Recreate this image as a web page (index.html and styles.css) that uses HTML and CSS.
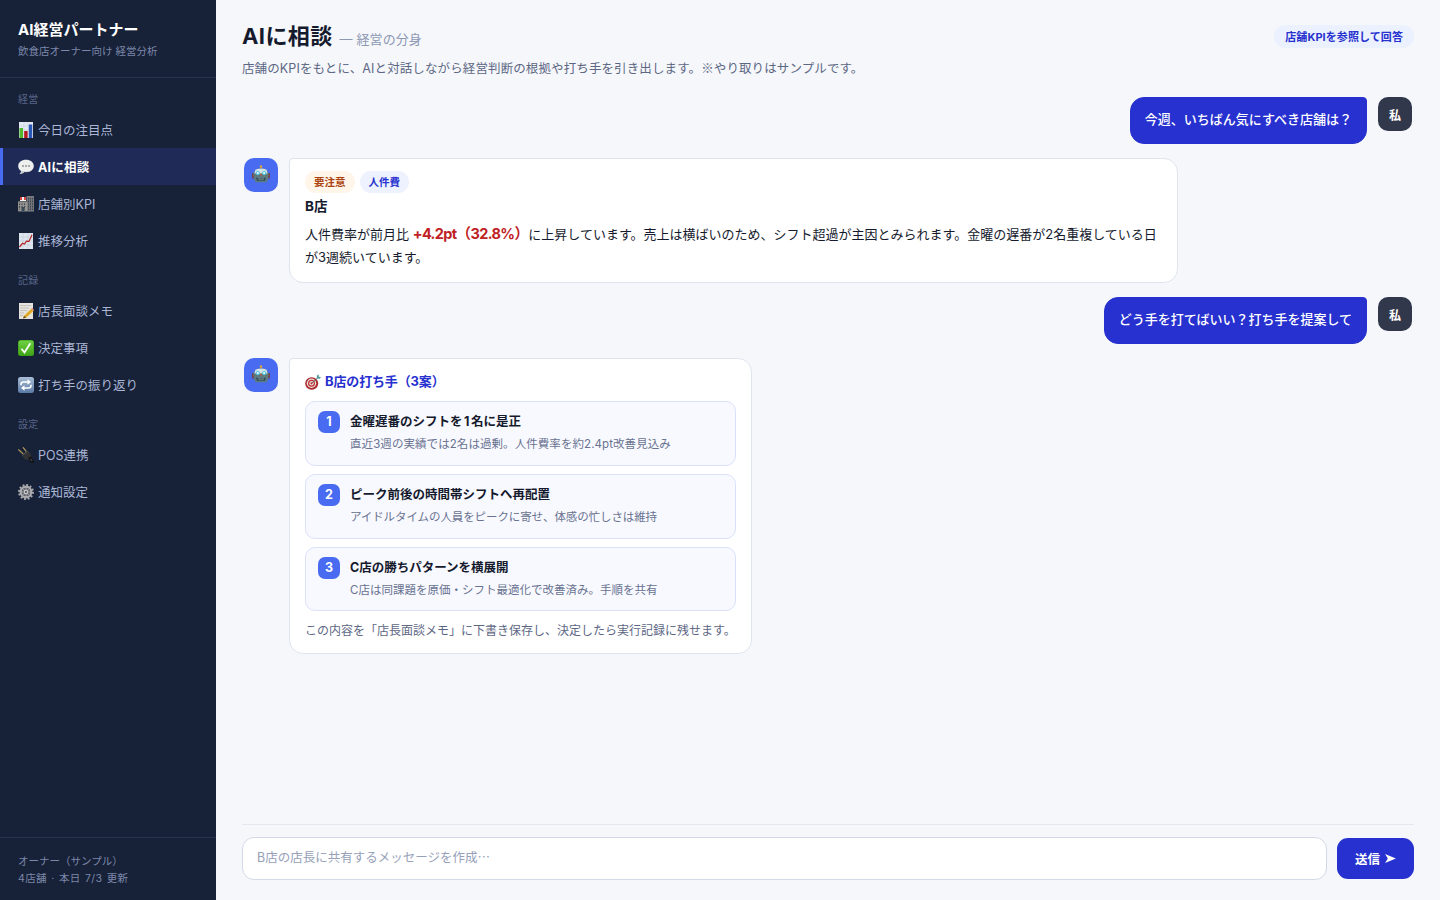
FILE: index.html
```html
<!DOCTYPE html>
<html lang="ja">
<head>
<meta charset="utf-8">
<title>AIに相談</title>
<link rel="stylesheet" href="styles.css">
</head>
<body>
<svg class="defs" aria-hidden="true">
  <defs>
    <linearGradient id="steel" x1="0" y1="0" x2="0" y2="1"><stop offset="0" stop-color="#a9bdd6"/><stop offset="1" stop-color="#5a7aa5"/></linearGradient>
    <linearGradient id="green" x1="0" y1="0" x2="0" y2="1"><stop offset="0" stop-color="#6fd044"/><stop offset="1" stop-color="#3fa516"/></linearGradient>
    <symbol id="robot" viewBox="0 0 16 16">
      <path d="M8 1v3" stroke="#a67a3c" stroke-width="1.2"/><circle cx="8" cy="1.3" r="1.1" fill="#e0a13c"/>
      <rect x="0" y="7" width="2" height="5" rx=".8" fill="#7a4145"/><rect x="14" y="7" width="2" height="5" rx=".8" fill="#7a4145"/>
      <path d="M3 4.300Q8 1.600 13 4.300L14.800 8Q14.900 12 12.900 15.300H3.100Q1.100 12 1.200 8Z" fill="#5c7a81"/>
      <path d="M3 4.300Q8 1.800 13 4.300L13.900 7.500H2.100Z" fill="#d3e2e5"/>
      <circle cx="5.2" cy="7.2" r="1.9" fill="#59c7dc"/><circle cx="10.8" cy="7.2" r="1.9" fill="#59c7dc"/>
      <circle cx="5.2" cy="7.2" r=".9" fill="#eefcff"/><circle cx="10.8" cy="7.2" r=".9" fill="#eefcff"/>
      <path d="M8 7.4l1.100 2H6.900z" fill="#c4483b"/><path d="M3.600 11q4.400 1.500 8.800 0l-.8 3H4.400z" fill="#344d56"/><path d="M6.300 11.800v1.600M8 12v1.500M9.700 11.800v1.600" stroke="#a4bdc1" stroke-width=".6"/>
    </symbol>
  </defs>
</svg>
<div class="app">
  <aside class="sidebar">
    <div class="brand">
      <div class="brand-name">AI経営パートナー</div>
      <div class="brand-sub">飲食店オーナー向け 経営分析</div>
    </div>
    <nav class="nav">
      <div class="nav-label">経営</div>
      <a class="nav-item"><svg class="emoji" viewBox="0 0 16 16"><rect x="1" y="0" width="14" height="16" fill="#e4e9f1"/><path d="M1 4h14M1 8h14M1 12h14M6 0v16M10 0v16" stroke="#c5cedb" stroke-width=".5"/><rect x="1.500" y="6" width="3.500" height="10" fill="#4fb82c"/><rect x="6.200" y="9" width="3.400" height="7" fill="#b5161d"/><rect x="10.800" y="2.500" width="3.400" height="13.500" fill="#2b57b8"/></svg>今日の注目点</a>
      <a class="nav-item active"><svg class="emoji" viewBox="0 0 16 16"><path d="M8 .8C3.500.8.2 3.400.2 7c0 2.200 1.200 3.900 2.800 5 .1 1.200-.7 2.500-1.500 3 2 .1 3.800-.7 4.900-1.900 5.200.7 9.400-2 9.400-6.100C15.800 3.400 12.500.8 8 .8z" fill="#eeefef"/><path d="M3.500 11.700c3 1.200 8 1.500 11-1.200-2.200 2.500-6 2.800-8.100 2.500L3 14.500z" fill="#bfc2c5"/><circle cx="5" cy="7" r=".8" fill="#555"/><circle cx="8" cy="7" r=".8" fill="#555"/><circle cx="11" cy="7" r=".8" fill="#555"/></svg>AIに相談</a>
      <a class="nav-item"><svg class="emoji" viewBox="0 0 16 16"><rect x="8.500" y="0" width="7.500" height="15" fill="#77787b"/><path d="M0 5.500h9.500V15H0z" fill="#97938e"/><path d="M0 5.200h9.500v1H0z" fill="#65676c"/><path d="M2 1h6v4H2z" fill="#f2f2f2"/><path d="M2 1h2v3H2zM6 1h2v3H6z" fill="#d54a43"/><path d="M1.500 7.500v6M4 7.500v4M6.500 7.500v6M10.500 2v12M12.500 2v12M14.500 2v12" stroke="#374552" stroke-width="1.100" stroke-dasharray="1.600 1"/><path d="M3.500 11h3v4h-3z" fill="#384958"/><path d="M0 15h16v.8H0z" fill="#58616b"/></svg>店舗別KPI</a>
      <a class="nav-item"><svg class="emoji" viewBox="0 0 16 16"><rect x="1" y="0" width="14" height="16" fill="#dfe6ef"/><path d="M1 4h14M1 8h14M1 12h14M5 0v16M10 0v16" stroke="#b8c4d3" stroke-width=".5"/><path d="M1.500 14l3-3.700 2 .8 2-3 2.500.3L14 1.800" fill="none" stroke="#b62424" stroke-width="1.200"/></svg>推移分析</a>
      <div class="nav-label">記録</div>
      <a class="nav-item"><svg class="emoji" viewBox="0 0 16 16"><path d="M1 0h14v16H1z" fill="#e5e3dc"/><path d="M2 2.500h11M2 5h9M2 7.500h7M2 10h4M2 12.500h3" stroke="#a7a9af" stroke-width=".6"/><path d="M6 12.800l7.300-7.100 2.200 2.200-7.300 6.900-3.200.7z" fill="#e8b32c"/><path d="M13.300 5.700l.9-.8 2 2-.7 1z" fill="#d87d82"/><path d="M5 15.500l1-2.700 2.200 2z" fill="#6a573b"/><path d="M7 13.600l7.100-6.900" stroke="#b98319" stroke-width=".5"/></svg>店長面談メモ</a>
      <a class="nav-item"><svg class="emoji" viewBox="0 0 16 16"><rect x="0" y="0" width="16" height="16" rx="2.500" fill="#369715"/><rect x=".5" y=".5" width="15" height="15" rx="2.200" fill="url(#green)"/><path d="M3.500 8.800l3 3.700 5.800-9.300" fill="none" stroke="#fff" stroke-width="1.800"/></svg>決定事項</a>
      <a class="nav-item"><svg class="emoji" viewBox="0 0 16 16"><rect width="16" height="16" rx="2.500" fill="url(#steel)"/><path d="M3 8.300V7.500Q3 5 5.500 5H10M13 7.700v.8Q13 11 10.500 11H6" fill="none" stroke="#fff" stroke-width="1.600"/><path d="M9.500 2.300L13 5 9.500 7.700zM6.500 8.300L3 11l3.500 2.700z" fill="#fff"/></svg>打ち手の振り返り</a>
      <div class="nav-label">設定</div>
      <a class="nav-item"><svg class="emoji" viewBox="0 0 16 16"><path d="M.3 2.500l5 4.500M5 .3l4 5" stroke="#b39a58" stroke-width="1.200"/><path d="M3.500 8L9.500 3.600l3.200 3.200.8 3.800-2.500 2-4 .2z" fill="#303235"/><path d="M4.500 8.200L9.400 4.500" stroke="#65686a" stroke-width=".8"/><path d="M10.300 10.500l2.500-1 3.200 5-.5 1.500-3-.7z" fill="#111214"/><path d="M12.500 11.800l1.500 2.200" stroke="#75787b" stroke-width=".7"/></svg>POS連携</a>
      <a class="nav-item"><svg class="emoji" viewBox="0 0 16 16"><circle cx="8" cy="8" r="7" fill="none" stroke="#a7a9ac" stroke-width="2" stroke-dasharray="1.900 1.765"/><circle cx="8" cy="8" r="5.300" fill="none" stroke="#a9abae" stroke-width="2.400"/><circle cx="8" cy="8" r="4" fill="#6d7075"/><path d="M8 3.500v9M3.500 8h9M4.800 4.800l6.400 6.400M4.800 11.200l6.400-6.400" stroke="#a6a8ab" stroke-width=".7"/><circle cx="8" cy="8" r="2.200" fill="#c9cacc"/><circle cx="8" cy="8" r="1" fill="#3e4249"/></svg>通知設定</a>
    </nav>
    <div class="account">オーナー（サンプル）<div class="updated">4店舗 · 本日 7/3 更新</div></div>
  </aside>
  <main class="main">
    <header class="head">
      <div>
        <h1 class="title">AIに相談<span class="title-sub">— 経営の分身</span></h1>
        <p class="lead">店舗のKPIをもとに、AIと対話しながら経営判断の根拠や打ち手を引き出します。<span class="cjk">※</span>やり取りはサンプルです。</p>
      </div>
      <span class="context">店舗KPIを参照して回答</span>
    </header>
    <section class="chat">
      <div class="row mine"><div class="bubble ask">今週、いちばん気にすべき店舗は？</div><div class="avatar me">私</div></div>
      <div class="row">
        <div class="avatar"><svg class="bot" viewBox="0 0 16 16"><use href="#robot"/></svg></div>
        <div class="bubble answer">
          <div class="chips"><span class="chip warn">要注意</span><span class="chip">人件費</span></div>
          <div class="store">B店</div>
          <p class="text">人件費率が前月比 <strong class="delta">+4.2pt（32.8%）</strong>に上昇しています。売上は横ばいのため、シフト超過が主因とみられます。金曜の遅番が2名重複している日が3週続いています。</p>
        </div>
      </div>
      <div class="row mine"><div class="bubble ask">どう手を打てばいい？打ち手を提案して</div><div class="avatar me">私</div></div>
      <div class="row">
        <div class="avatar"><svg class="bot" viewBox="0 0 16 16"><use href="#robot"/></svg></div>
        <div class="bubble plan">
          <div class="plan-title"><svg class="target" viewBox="0 0 16 16"><ellipse cx="6.700" cy="9.500" rx="6.500" ry="6.200" fill="#a92b2d"/><circle cx="6.500" cy="9.300" r="4.700" fill="#eee4e0"/><circle cx="6.500" cy="9.300" r="3.500" fill="#bd3033"/><circle cx="6.500" cy="9.300" r="2.200" fill="#eee4e0"/><circle cx="6.500" cy="9.300" r="1.100" fill="#bd3033"/><path d="M6.500 9.300L13 3.800" stroke="#555f64" stroke-width=".8"/><path d="M11.500 4.500L12 1.500l1.600-1.300.2 2.500 2.200.3-1.300 1.700z" fill="#4f9b9d"/></svg>B店の打ち手（3案）</div>
          <div class="option"><span class="num">1</span><div><div class="option-title">金曜遅番のシフトを<span class="digit">1</span>名に是正</div><div class="option-desc loose">直近3週の実績では2名は過剰。人件費率を約2.4pt改善見込み</div></div></div>
          <div class="option"><span class="num">2</span><div><div class="option-title">ピーク前後の時間帯シフトへ再配置</div><div class="option-desc tight">アイドルタイムの人員をピークに寄せ、体感の忙しさは維持</div></div></div>
          <div class="option"><span class="num">3</span><div><div class="option-title">C店の勝ちパターンを横展開</div><div class="option-desc">C店は同課題を原価・シフト最適化で改善済み。手順を共有</div></div></div>
          <div class="note">この内容を「店長面談メモ」に下書き保存し、決定したら実行記録に残せます。</div>
        </div>
      </div>
    </section>
    <footer class="composer">
      <div class="field">B店の店長に共有するメッセージを作成<span class="cjk">…</span></div>
      <button class="send">送信<svg class="send-icon" viewBox="0 0 12 10"><path d="M0 0L12 5 0 10 3 5z" fill="#fff"/></svg></button>
    </footer>
  </main>
</div>
</body>
</html>
```
FILE: styles.css
```css
* { box-sizing: border-box; }
body {
  margin: 0;
  font-family: Inter, "Noto Sans CJK JP", sans-serif;
  font-size: 13px;
  color: #151a2d;
  background: #f5f7fb;
}
p, h1 { margin: 0; }
svg { display: block; flex: none; }
.defs { position: absolute; width: 0; height: 0; }
.app { display: flex; height: 900px; }

.sidebar { width: 216px; flex: none; display: flex; flex-direction: column; background: #172137; }
.brand { height: 78px; padding: 18px 18px 0; border-bottom: 1px solid #29324a; white-space: nowrap; }
.brand-name { font-size: 15px; line-height: 23px; font-weight: 700; color: #fff; }
.brand-sub { margin-top: 3px; font-size: 10.5px; line-height: 16px; color: #7c88ab; }
.nav { flex: 1; }
.nav-label { height: 33px; padding: 14px 18px 0; font-size: 10px; line-height: 14px; letter-spacing: .3px; color: #59668a; }
.nav-item { display: flex; align-items: center; gap: 4px; height: 37px; padding-left: 15px; border-left: 3px solid transparent; font-size: 12.5px; color: #aab6d6; }
.nav-item.active { background: #1f2b56; border-left-color: #496bf1; color: #fff; font-weight: 700; letter-spacing: .2px; }
.emoji { width: 16px; height: 16px; }
.account { height: 63px; padding: 15px 18px 0; border-top: 1px solid #29324a; font-size: 10.5px; line-height: 17px; color: #7c88ab; }
.updated { letter-spacing: .4px; word-spacing: .9px; }

.main { flex: 1; min-width: 0; display: flex; flex-direction: column; padding: 20px 26px; }
.head { display: flex; justify-content: space-between; align-items: flex-start; height: 77px; white-space: nowrap; }
.title { font-size: 22px; line-height: 32px; font-weight: 700; letter-spacing: .4px; }
.title-sub { margin-left: 7px; font-size: 13px; font-weight: 400; letter-spacing: .1px; color: #8d98b4; }
.lead { margin-top: 4px; font-size: 12.5px; line-height: 20px; letter-spacing: .11px; color: #5d6784; }
.context { margin-top: 5px; padding: 1px 11px 0; border-radius: 12px; background: #ebf1fe; color: #2731cf; font-size: 11px; line-height: 22px; letter-spacing: .08px; font-weight: 700; }

.chat { flex: 1; display: flex; flex-direction: column; gap: 14px; padding: 0 2px; }
.row { display: flex; align-items: flex-start; gap: 11px; }
.mine { justify-content: flex-end; }
.avatar { width: 34px; height: 34px; flex: none; display: flex; align-items: center; justify-content: center; border-radius: 10px; background: #496bf1; }
.me { background: #31384b; color: #fff; font-size: 12px; font-weight: 700; }
.bot { width: 18px; height: 18px; margin-top: -2px; }
.bubble { padding: 12px 15px; border: 1px solid #e0e4ef; border-radius: 4px 14px 14px 14px; background: #fff; line-height: 23px; }
.ask { height: 47px; padding: 10px 14px; border-color: #2731cf; border-radius: 14px 4px 14px 14px; background: #2731cf; color: #fff; white-space: nowrap; font-weight: 500; }
.answer { width: 889px; height: 125px; }
.chips { display: flex; gap: 5px; }
.chip { padding: 1px 9px 0; border-radius: 11px; background: #eef2fe; color: #2731cf; font-size: 10.5px; line-height: 21px; font-weight: 700; }
.warn { background: #fff5e9; color: #ab4411; }
.store { margin-top: 1px; font-size: 13.5px; line-height: 24px; font-weight: 700; }
.text { margin-top: 5px; line-height: 23px; }
.delta { font-size: 14.5px; line-height: 20px; letter-spacing: -.62px; color: #c02124; }

.plan { width: 463px; height: 296px; white-space: nowrap; }
.plan-title { display: flex; align-items: center; gap: 4px; height: 21px; margin-bottom: 9px; letter-spacing: -.15px; font-weight: 700; color: #2731cf; }
.target { width: 16px; height: 16px; }
.option { display: flex; gap: 10px; height: 65px; margin-bottom: 8px; padding: 9px 12px; border: 1px solid #dae1fb; border-radius: 10px; background: #f8f9ff; }
.option:nth-child(4) { height: 64px; margin-bottom: 9px; }
.num { width: 22px; height: 22px; border-radius: 7px; background: #496bf1; color: #fff; font-size: 12.5px; line-height: 22px; font-weight: 700; text-align: center; }
.option-title { font-size: 12.5px; line-height: 21px; font-weight: 700; }
.digit { margin: 0 1.5px; }
.option-desc { margin-top: 2px; font-size: 11.5px; line-height: 20px; color: #687290; }
.loose { letter-spacing: .07px; }
.tight { letter-spacing: -.1px; }
.note { font-size: 12px; line-height: 22px; color: #5d6784; }

.composer { display: flex; align-items: center; gap: 10px; height: 56px; padding-top: 12px; border-top: 1px solid #e5e8f0; }
.field { flex: 1; height: 43px; padding: 0 14px; border: 1px solid #d3d9e6; border-radius: 12px; background: #fff; font-size: 12.5px; line-height: 40px; color: #96a1b8; }
.cjk { font-family: "Noto Sans CJK JP", sans-serif; line-height: 1; }
.send { display: flex; align-items: center; justify-content: center; gap: 5px; width: 77px; height: 41px; padding: 0; border: 0; border-radius: 11px; background: #2731cf; color: #fff; font: inherit; font-size: 12.5px; font-weight: 700; }
.send-icon { width: 11px; height: 9px; }
```
